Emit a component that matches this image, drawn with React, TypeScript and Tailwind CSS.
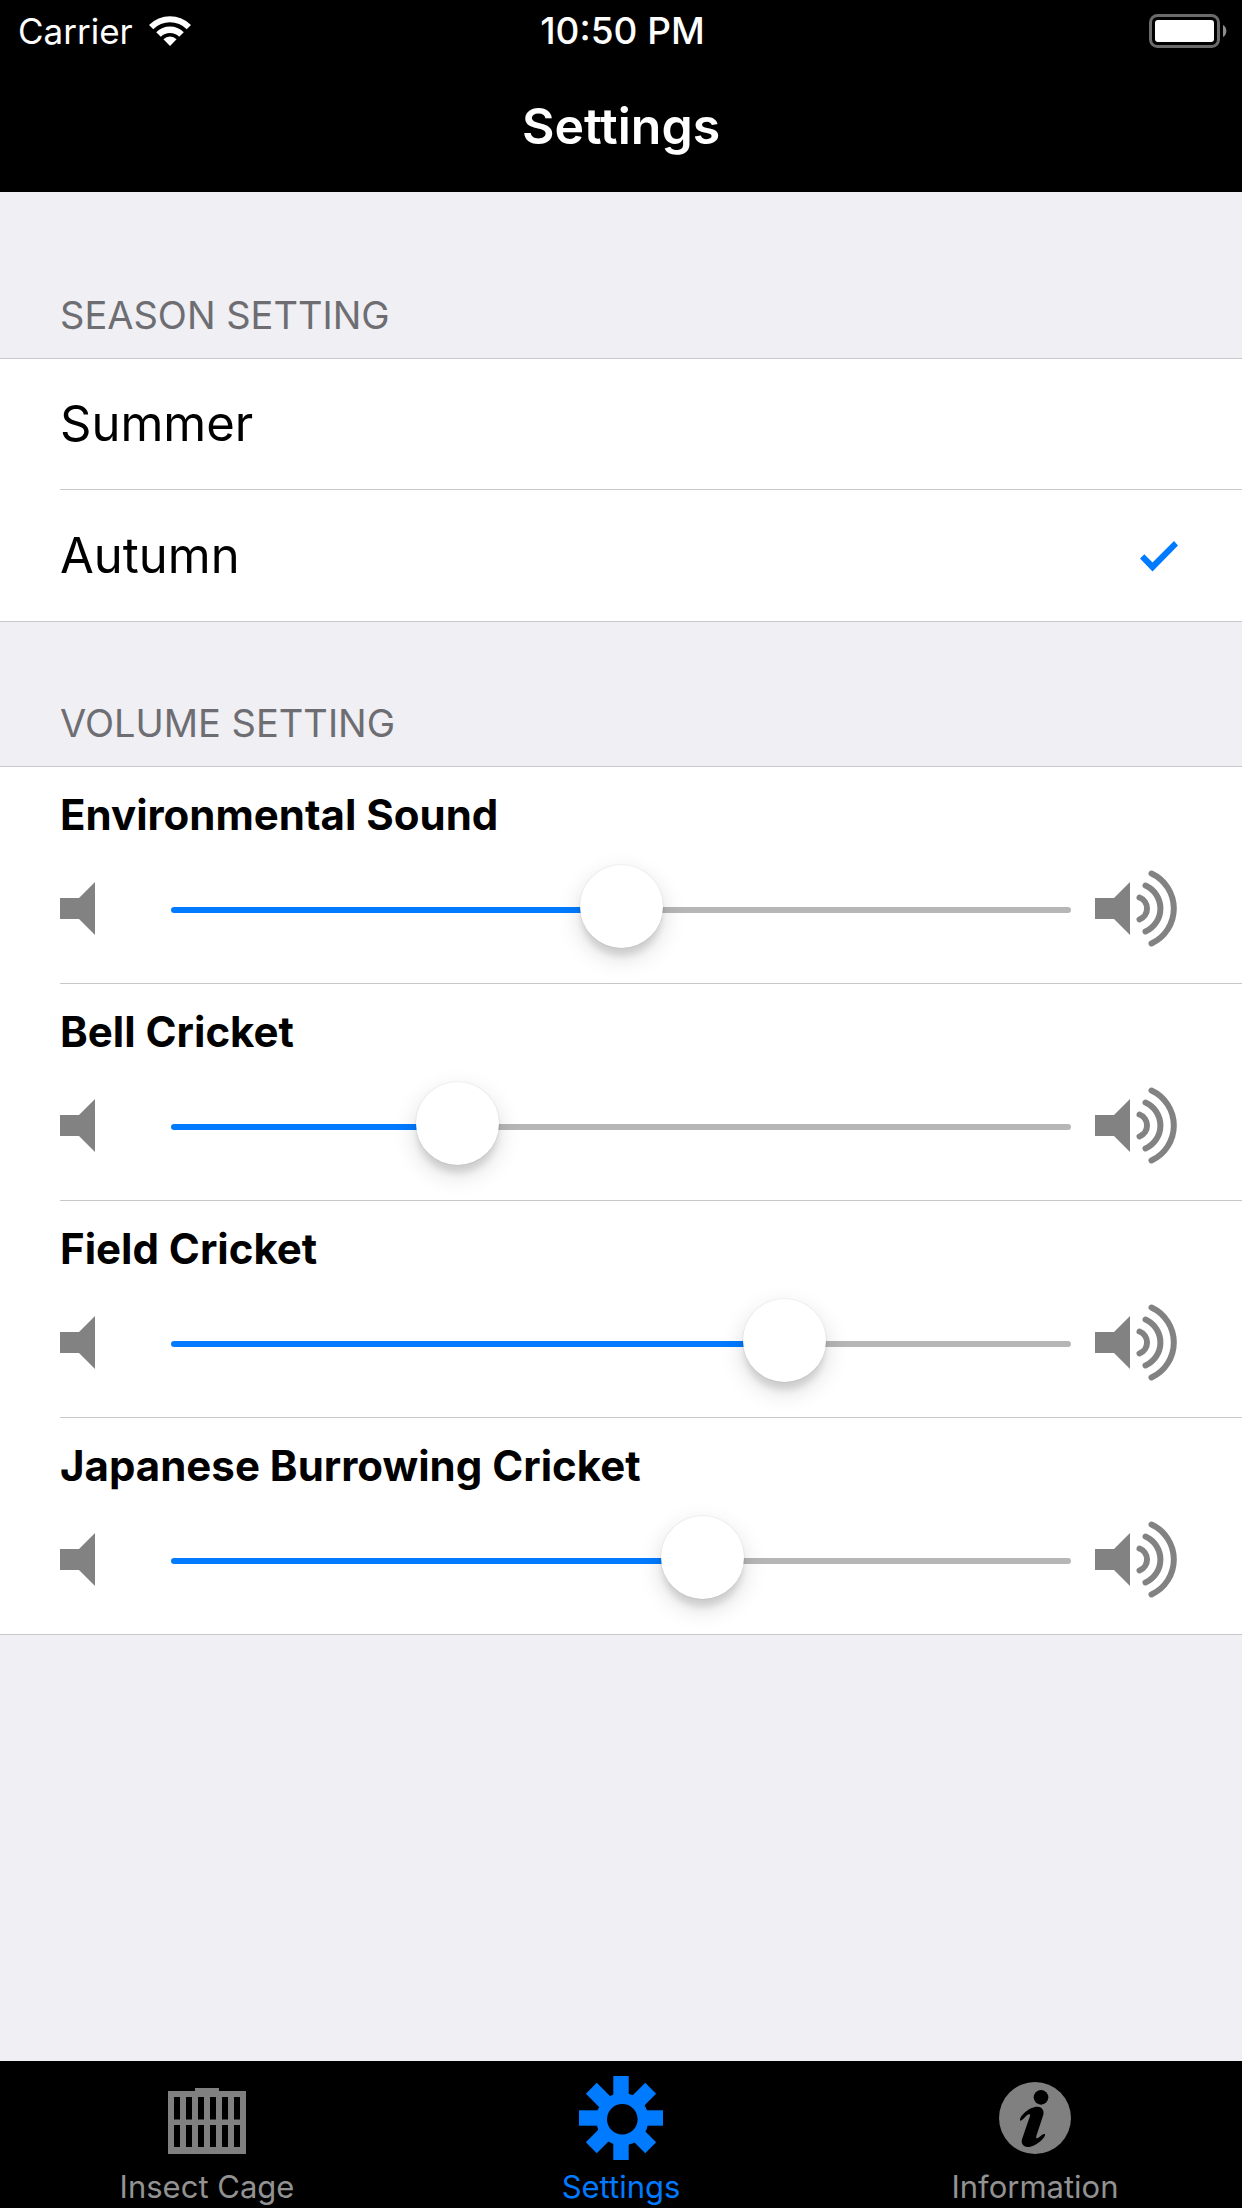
import React, { useState } from 'react';

const SEASONS = ['Summer', 'Autumn'];

const VOLUMES = [
  { id: 'environment', name: 'Environmental Sound', value: 50 },
  { id: 'bell', name: 'Bell Cricket', value: 30 },
  { id: 'field', name: 'Field Cricket', value: 70 },
  { id: 'burrowing', name: 'Japanese Burrowing Cricket', value: 60 },
];

const WifiIcon: React.FC = () => (
  <svg className="w-[42px] h-[30px]" viewBox="-64 -91 128 91" fill="currentColor" aria-hidden="true">
    <path d="M-64 -64A91 91 0 0 1 64 -64L51 -51A72 72 0 0 0 -51 -51Z" />
    <path d="M-42 -42A60 60 0 0 1 42 -42L28 -28A40 40 0 0 0 -28 -28Z" />
    <path d="M-20 -20A28 28 0 0 1 20 -20L0 0Z" />
  </svg>
);

const BatteryIcon: React.FC = () => (
  <svg className="w-[78px] h-[34px]" viewBox="0 0 78 34" aria-hidden="true">
    <rect x="1.5" y="1.5" width="68" height="31" rx="7" fill="none" stroke="#6b6b6b" strokeWidth="3" />
    <rect x="6" y="6" width="59" height="22" rx="3" fill="#fff" />
    <path d="M74 11A7 7 0 0 1 74 23Z" fill="#8e8e8e" />
  </svg>
);

const CheckIcon: React.FC = () => (
  <svg className="w-[39px] h-[32px]" viewBox="0 0 39 32" fill="#007aff" aria-hidden="true">
    <path d="M1 18.500L5.300 14.200L13.500 22.500L35 1L39 5.500L13.500 31.500Z" />
  </svg>
);

const SpeakerLow: React.FC = () => (
  <svg className="w-[35px] h-[80px] shrink-0" viewBox="0 0 35 80" fill="#828282" aria-hidden="true">
    <path d="M0 28H19L35 12V65L19 49H0Z" />
  </svg>
);

const SpeakerHigh: React.FC = () => (
  <svg className="w-[83px] h-[80px] shrink-0" viewBox="0 0 83 80" fill="#828282" aria-hidden="true">
    <path d="M0 28H19L35 12V65L19 49H0Z" />
    <g fill="none" stroke="#828282" strokeWidth="6" strokeLinecap="round">
      <path d="M44.500 27.500A11.800 11.800 0 0 1 44.500 49.500" />
      <path d="M50.500 15.500A25.200 25.200 0 0 1 50.500 61.500" />
      <path d="M56.500 3.500A38.600 38.600 0 0 1 56.500 73.500" />
    </g>
  </svg>
);

const CageIcon: React.FC = () => (
  <svg className="w-[84px] h-[84px]" viewBox="0 0 84 84" fill="#808080" aria-hidden="true">
    <path d="M30 12H54V15H81V78H3V15H30Z" />
    <g fill="#000">
      {[9, 21, 33, 45, 57, 69].map((x) => (
        <React.Fragment key={x}>
          <rect x={x} y="21" width="6" height="22.500" />
          <rect x={x} y="49" width="6" height="22" />
        </React.Fragment>
      ))}
    </g>
  </svg>
);

const GearIcon: React.FC = () => (
  <svg className="w-[84px] h-[84px]" viewBox="0 0 84 84" fill="#007aff" aria-hidden="true">
    {[0, 45, 90, 135].map((angle) => (
      <rect key={angle} x="34.300" y="0" width="15.400" height="84" transform={`rotate(${angle} 42 42)`} />
    ))}
    <circle cx="43.300" cy="43.300" r="26.300" />
    <circle cx="43.300" cy="43.300" r="15.300" fill="#000" />
  </svg>
);

const InfoIcon: React.FC = () => (
  <svg className="w-[84px] h-[84px]" viewBox="-126 -126 252 252" aria-hidden="true">
    <circle r="108" fill="#808080" />
    <circle cx="18" cy="-62" r="22" />
    <path d="M-45 6C-46 -6 -17 -35 8 -34C22 -33 28 -22 25 -10L4 54C2 62 6 63 12 58C18 53 24 47 30 48C34 56 3 88 -22 87C-36 86 -42 77 -39 64L-15 -6C-13 -13 -18 -13 -24 -8C-32 -1 -39 9 -44 8Z" />
  </svg>
);

const TABS = [
  { label: 'Insect Cage', icon: <CageIcon />, active: false },
  { label: 'Settings', icon: <GearIcon />, active: true },
  { label: 'Information', icon: <InfoIcon />, active: false },
];

const VolumeRow: React.FC<{ id: string; name: string; initial: number }> = ({ id, name, initial }) => {
  const [value, setValue] = useState(initial);
  return (
    <div className="pt-[22px] pb-[31px] pr-16">
      <label htmlFor={id} className="block text-[42px] leading-[52px] font-bold">{name}</label>
      <div className="flex items-center mt-[27px] h-[84px]">
        <SpeakerLow />
        <input
          id={id}
          type="range"
          min={0}
          max={100}
          value={value}
          onChange={(e) => setValue(Number(e.target.value))}
          style={{ '--fill': `${value}%` } as React.CSSProperties}
          className="ml-[76px] mr-6 flex-1 min-w-0 h-[84px] appearance-none bg-transparent outline-none [&::-webkit-slider-runnable-track]:h-[6px] [&::-webkit-slider-runnable-track]:rounded-full [&::-webkit-slider-runnable-track]:bg-[linear-gradient(to_right,#007aff_var(--fill),#b6b6b6_var(--fill))] [&::-webkit-slider-thumb]:appearance-none [&::-webkit-slider-thumb]:size-[83px] [&::-webkit-slider-thumb]:-mt-[42px] [&::-webkit-slider-thumb]:rounded-full [&::-webkit-slider-thumb]:bg-white [&::-webkit-slider-thumb]:shadow-[0_0_0_1px_rgba(0,0,0,0.04),0_9px_6px_-1px_rgba(0,0,0,0.1),0_9px_24px_rgba(0,0,0,0.15)]"
        />
        <SpeakerHigh />
      </div>
    </div>
  );
};

export default function App() {
  const [season, setSeason] = useState('Autumn');

  return (
    <div className="min-h-screen flex flex-col bg-[#efeff4] text-black font-['Inter',sans-serif]">
      <header className="bg-black text-white">
        <div className="grid grid-cols-3 items-center h-[62px] pl-[18px] pr-[15px] text-[35px] leading-[44px]">
          <div className="flex items-center gap-4">
            <span>Carrier</span>
            <WifiIcon />
          </div>
          <time className="text-center text-[37px] font-medium">10:50 PM</time>
          <div className="flex justify-end"><BatteryIcon /></div>
        </div>
        <h1 className="h-[130px] pb-[2px] flex items-center justify-center text-[50px] font-semibold">Settings</h1>
      </header>

      <main className="flex-1">
        <section>
          <h2 className="pt-[99px] pb-[19px] pl-[60px] text-[38px] leading-[48px] text-[#6d6d72]">SEASON SETTING</h2>
          <div className="bg-white border-y border-[#c8c7cc] pl-[60px]">
            {SEASONS.map((name) => (
              <label key={name} className="flex items-center justify-between h-[131px] pr-16 text-[49px] border-b border-[#c8c7cc] last:border-b-0">
                <input
                  type="radio"
                  name="season"
                  className="sr-only"
                  checked={season === name}
                  onChange={() => setSeason(name)}
                />
                <span>{name}</span>
                {season === name && <CheckIcon />}
              </label>
            ))}
          </div>
        </section>

        <section>
          <h2 className="pt-[77px] pb-[19px] pl-[60px] text-[38px] leading-[48px] text-[#6d6d72]">VOLUME SETTING</h2>
          <div className="bg-white border-y border-[#c8c7cc] pl-[60px] divide-y divide-[#c8c7cc]">
            {VOLUMES.map((v) => (
              <VolumeRow key={v.id} id={v.id} name={v.name} initial={v.value} />
            ))}
          </div>
        </section>
      </main>

      <nav className="grid grid-cols-3 bg-black pt-[15px]">
        {TABS.map((tab) => (
          <a
            key={tab.label}
            href="#"
            aria-current={tab.active ? 'page' : undefined}
            className={`flex flex-col items-center gap-[9px] pb-[3px] text-[31px] leading-[36px] ${tab.active ? 'text-[#007aff]' : 'text-[#929292]'}`}
          >
            {tab.icon}
            {tab.label}
          </a>
        ))}
      </nav>
    </div>
  );
}
